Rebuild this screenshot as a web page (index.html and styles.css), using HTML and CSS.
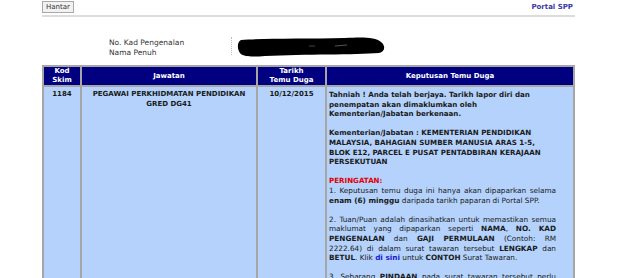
FILE: index.html
```html
<!DOCTYPE html>
<html lang="ms">
<head>
  <meta charset="UTF-8">
  <title>Semakan Keputusan Temu Duga</title>
  <link rel="stylesheet" href="styles.css">
</head>
<body>
  <div class="page">
    <div class="topbar">
      <button class="btn">Hantar</button>
      <a class="portal" href="#">Portal SPP</a>
    </div>

    <div class="info">
      <div class="labels">
        <div>No. Kad Pengenalan</div>
        <div>Nama Penuh</div>
      </div>
      <div class="values">
        <svg class="redact" width="152" height="22" viewBox="0 0 152 22">
          <path d="M6 4 C30 2 70 3 110 2 C128 1 140 1 146 6 C151 10 150 16 144 17 C120 19 70 18 30 20 C18 21 8 21 5 17 C2 13 2 6 6 4 Z" fill="#000"/>
          <path d="M100 10 L112 9" stroke="#555" stroke-width="1"/>
          <path d="M74 10 L80 10" stroke="#444" stroke-width="1"/>
        </svg>
      </div>
    </div>

    <table class="result">
      <tr>
        <th class="c-kod">Kod<br>Skim</th>
        <th class="c-jaw">Jawatan</th>
        <th class="c-tar">Tarikh<br>Temu Duga</th>
        <th class="c-kep">Keputusan Temu Duga</th>
      </tr>
      <tr>
        <td class="center bold">1184</td>
        <td class="center bold">PEGAWAI PERKHIDMATAN PENDIDIKAN GRED DG41</td>
        <td class="center bold">10/12/2015</td>
        <td class="kep">
          <p class="bold">Tahniah ! Anda telah berjaya. Tarikh lapor diri dan penempatan akan dimaklumkan oleh Kementerian/Jabatan berkenaan.</p>
          <p class="bold">Kementerian/Jabatan : KEMENTERIAN PENDIDIKAN MALAYSIA, BAHAGIAN SUMBER MANUSIA ARAS 1-5, BLOK E12, PARCEL E PUSAT PENTADBIRAN KERAJAAN PERSEKUTUAN</p>
          <p class="warn-title">PERINGATAN:</p>
          <p class="just">1. Keputusan temu duga ini hanya akan dipaparkan selama <b>enam (6) minggu</b> daripada tarikh paparan di Portal SPP.</p>
          <p class="just">2. Tuan/Puan adalah dinasihatkan untuk memastikan semua maklumat yang dipaparkan seperti <b>NAMA</b>, <b>NO. KAD PENGENALAN</b> dan <b>GAJI PERMULAAN</b> (Contoh: RM 2222.64) di dalam surat tawaran tersebut <b>LENGKAP</b> dan <b>BETUL</b>. Klik <a href="#">di sini</a> untuk <b>CONTOH</b> Surat Tawaran.</p>
          <p class="just">3. Sebarang <b>PINDAAN</b> pada surat tawaran tersebut perlu dikemukakan kepada Kementerian/Jabatan berkenaan.</p>
        </td>
      </tr>
    </table>
  </div>
</body>
</html>
```

FILE: styles.css
```css
body {
  margin: 0;
  background-color: #fff;
  font-family: 'DejaVu Sans', Verdana, sans-serif;
  font-size: 7px;
  color: #222;
}
.page {
  margin-left: 42px;
  width: 533px;
}
.topbar {
  display: flex;
  justify-content: space-between;
  align-items: center;
  padding-top: 1px;
  padding-bottom: 2px;
  border-bottom: 2px solid #dcdcdc;
}
.btn {
  font-family: 'DejaVu Sans', Verdana, sans-serif;
  font-size: 7px;
  color: #333;
  background-color: #f2f2f2;
  border: 1px solid #a8a8a8;
  padding: 1px 3px;
  margin: 0;
  height: 12px;
  line-height: 8px;
}
.portal {
  color: #3a3aa8;
  font-weight: bold;
  text-decoration: none;
  margin-right: 2px;
}
.info {
  display: flex;
  margin-top: 18px;
  height: 30px;
}
.labels {
  width: 122px;
  padding-left: 67px;
  padding-top: 3px;
  line-height: 10px;
  font-size: 7.5px;
  color: #333;
}
.values {
  border-left: 1px dotted #bbb;
  height: 18px;
  margin-top: 2px;
  padding-left: 3px;
}
.redact {
  display: block;
  margin-top: -1px;
}
.result {
  width: 533px;
  border-collapse: separate;
  border-spacing: 2px;
  background-color: #a6a6a6;
}
.result th {
  background-color: #000080;
  color: #fff;
  font-weight: bold;
  line-height: 9px;
  padding: 0 2px;
  height: 18px;
}
.c-kod { width: 32px; }
.c-jaw { width: 170px; }
.c-tar { width: 63px; }
.result td {
  background-color: #b4d2fb;
  vertical-align: top;
  padding: 3px 5px;
  line-height: 9.6px;
  color: #1a1a1a;
}
.center { text-align: center; }
.bold { font-weight: bold; }
.result td.kep {
  padding: 3px 17px 3px 2px;
  font-size: 7.1px;
}
.kep p {
  margin: 0 0 9.6px 0;
}
.warn-title {
  color: #e00000;
  font-weight: bold;
}
.kep p.warn-title { margin-bottom: 0; }
.kep p.just {
  text-align: justify;
  font-size: 7.3px;
}
.kep a {
  color: #1a1ad0;
  font-weight: bold;
  text-decoration: none;
}
```
